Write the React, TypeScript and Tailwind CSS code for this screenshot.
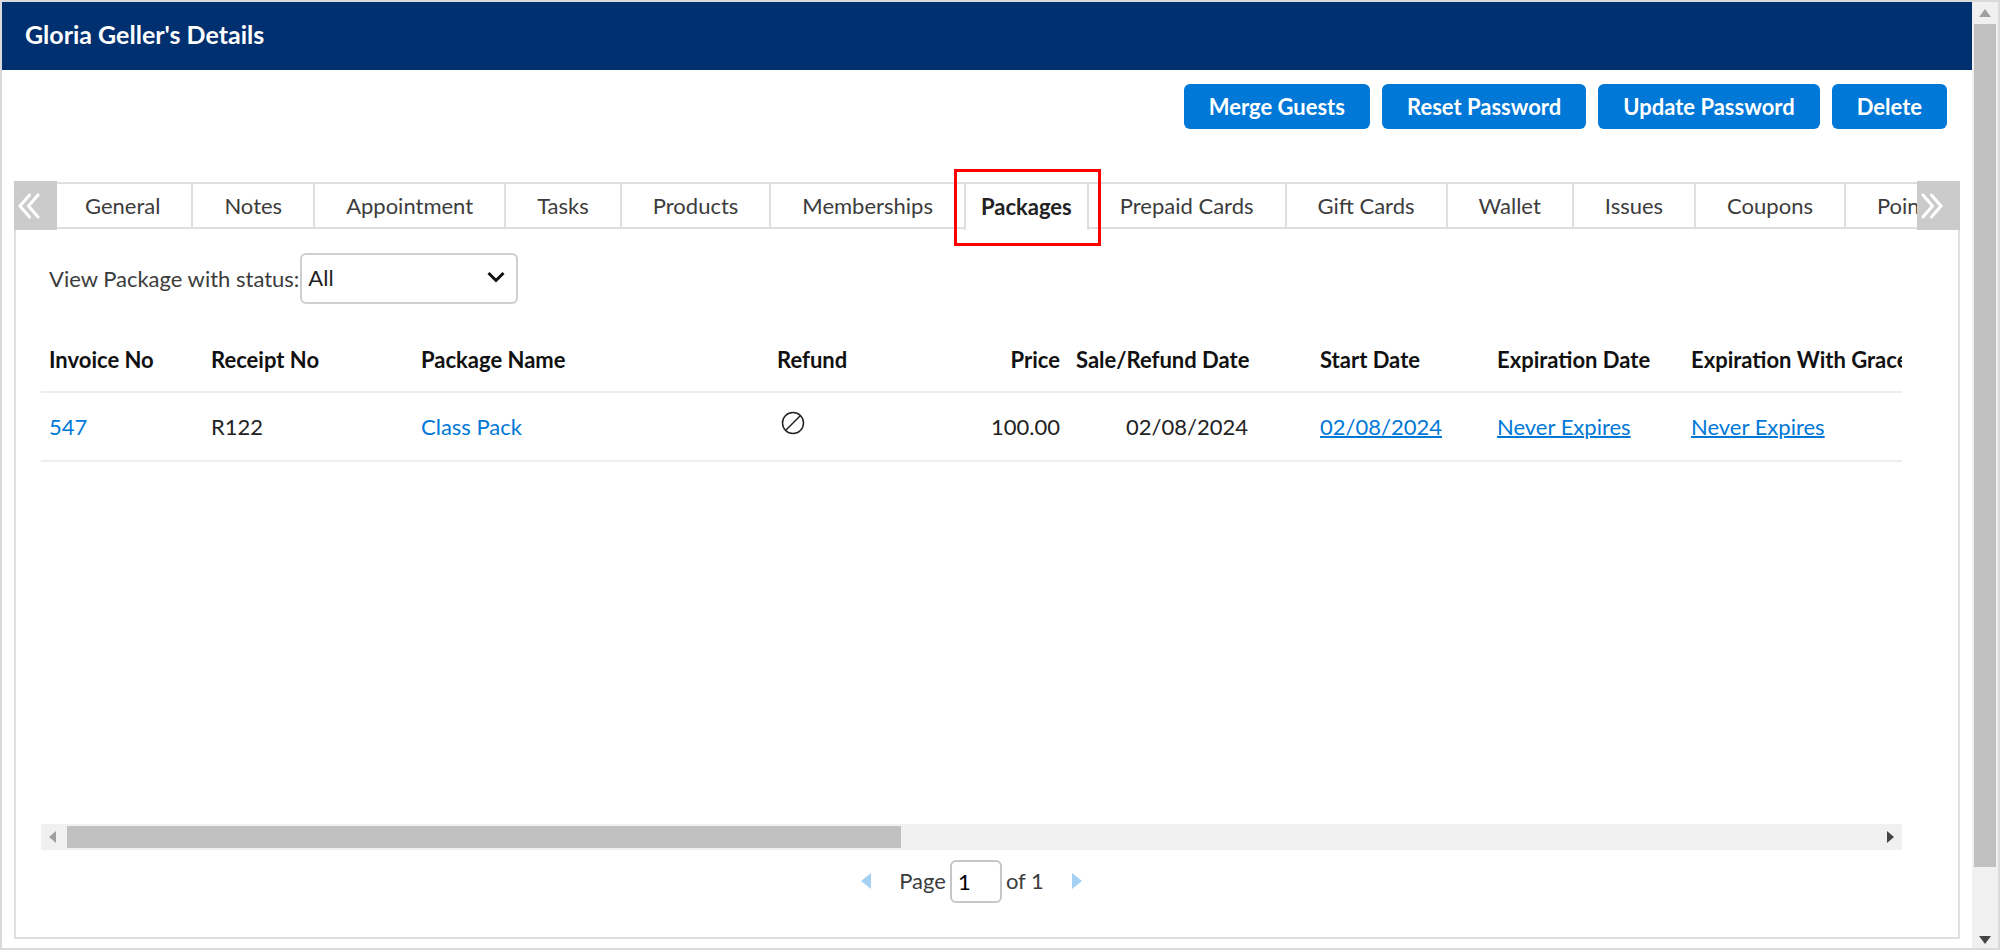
import React, { useState } from 'react';

const actions = ['Merge Guests', 'Reset Password', 'Update Password', 'Delete'];

const tabs = [
  'General',
  'Notes',
  'Appointment',
  'Tasks',
  'Products',
  'Memberships',
  'Packages',
  'Prepaid Cards',
  'Gift Cards',
  'Wallet',
  'Issues',
  'Coupons',
  'Points',
];

const packages = [
  {
    invoice: '547',
    receipt: 'R122',
    name: 'Class Pack',
    price: '100.00',
    saleDate: '02/08/2024',
    startDate: '02/08/2024',
    expiration: 'Never Expires',
    grace: 'Never Expires',
  },
];

const Triangle = ({ className }: { className: string }) => (
  <svg viewBox="0 0 12 16" preserveAspectRatio="none" className={className} fill="currentColor" aria-hidden="true">
    <path d="M12 0v16L0 8z" />
  </svg>
);

const DoubleChevron = ({ className = '' }: { className?: string }) => (
  <svg
    viewBox="0 0 22 28"
    className={`w-[22px] h-7 ${className}`}
    fill="none"
    stroke="currentColor"
    strokeWidth="3"
    strokeLinecap="round"
    aria-hidden="true"
  >
    <path d="M11.500 3L2 14l9.500 11M20 3l-9.500 11L20 25" />
  </svg>
);

const TabBar = ({ active, setActive }: { active: string; setActive: (t: string) => void }) => (
  <div className="flex items-stretch h-[49px]">
    <button aria-label="Previous tabs" className="relative z-10 w-[43px] shrink-0 bg-[#cbcbcb] text-white flex items-center pl-1">
      <DoubleChevron />
    </button>
    <div className="flex-1 min-w-0 -ml-[3px]">
      <div className="flex h-full pt-px overflow-x-clip" role="tablist">
        {tabs.map((tab) => (
          <div key={tab} className="relative shrink-0 flex">
            <button
              role="tab"
              aria-selected={tab === active}
              onClick={() => setActive(tab)}
              className={`whitespace-nowrap ${
                tab === active
                  ? '-ml-[2px] px-[15px] font-bold text-[#222] bg-white border-x-2 border-t-2 border-[#dfdfdf]'
                  : 'mb-px px-[31px] text-[#3c3c3c] border-y-2 border-r-2 border-[#dfdfdf]'
              }`}
            >
              {tab}
            </button>
            {tab === active && (
              <span className="absolute -inset-x-3 -top-[13px] -bottom-4 border-3 border-[#f00] pointer-events-none z-10" />
            )}
          </div>
        ))}
      </div>
    </div>
    <button aria-label="Next tabs" className="relative w-[43px] shrink-0 bg-[#cbcbcb] text-white flex items-center pl-1">
      <DoubleChevron className="rotate-180" />
    </button>
  </div>
);

const PackageTable = () => (
  <div className="overflow-hidden">
    <table className="table-fixed w-[1942px] text-left">
      <colgroup>
        <col className="w-[162px]" />
        <col className="w-[210px]" />
        <col className="w-[356px]" />
        <col className="w-[200px]" />
        <col className="w-[99px]" />
        <col className="w-[188px]" />
        <col className="w-[233px]" />
        <col className="w-[194px]" />
        <col className="w-[300px]" />
      </colgroup>
      <thead>
        <tr className="h-[64px] border-b-2 border-[#eee] text-[#111] whitespace-nowrap">
          <th className="px-2">Invoice No</th>
          <th className="px-2">Receipt No</th>
          <th className="px-2">Package Name</th>
          <th className="px-2">Refund</th>
          <th className="px-2 text-right">Price</th>
          <th className="px-2 text-right">Sale/Refund Date</th>
          <th className="pl-16">Start Date</th>
          <th className="px-2">Expiration Date</th>
          <th className="px-2">Expiration With Grace</th>
        </tr>
      </thead>
      <tbody>
        {packages.map((p) => (
          <tr key={p.invoice} className="h-[69px] border-b-2 border-[#eee] text-[#222]">
            <td className="px-2"><a href="#" className="text-[#0078d7]">{p.invoice}</a></td>
            <td className="px-2">{p.receipt}</td>
            <td className="px-2"><a href="#" className="text-[#0078d7]">{p.name}</a></td>
            <td className="px-2">
              <button aria-label="Refund" className="block pl-1 pb-2">
                <svg viewBox="0 0 24 24" className="w-6 h-6" fill="none" stroke="#222" strokeWidth="1.5">
                  <circle cx="12" cy="12" r="10.5" />
                  <path d="M4.8 19.2L19.2 4.8" />
                </svg>
              </button>
            </td>
            <td className="px-2 text-right">{p.price}</td>
            <td className="px-2 text-right">{p.saleDate}</td>
            <td className="pl-16"><a href="#" className="text-[#0078d7] underline decoration-2">{p.startDate}</a></td>
            <td className="px-2"><a href="#" className="text-[#0078d7] underline decoration-2">{p.expiration}</a></td>
            <td className="px-2"><a href="#" className="text-[#0078d7] underline decoration-2">{p.grace}</a></td>
          </tr>
        ))}
      </tbody>
    </table>
  </div>
);

const App: React.FC = () => {
  const [active, setActive] = useState('Packages');
  const [page, setPage] = useState('1');

  return (
    <div className="min-h-screen flex border-2 border-[#dadada] bg-white font-['Lato',sans-serif] text-[22px] leading-7 text-[#3c3c3c]">
      <div className="flex-1 min-w-0 flex flex-col">
        <header className="h-[68px] bg-[#003070] flex items-center px-[23px]">
          <h1 className="text-white text-[25px] font-bold pb-1">{"Gloria Geller's Details"}</h1>
        </header>

        <div className="flex justify-end gap-3 pt-[14px] pr-[25px]">
          {actions.map((label) => (
            <button key={label} className="h-[45px] px-[25px] rounded-md bg-[#0078d7] text-white font-bold">
              {label}
            </button>
          ))}
        </div>

        <main className="flex-1 flex flex-col mt-[52px] mx-3 mb-[9px]">
          <TabBar active={active} setActive={setActive} />

          <section className="flex-1 flex flex-col border-2 border-t-0 border-[#dfdfdf] pl-[25px] pr-14 pt-[23px]">
            <div className="flex items-center gap-px pl-2">
              <label htmlFor="status">View Package with status:</label>
              <div className="relative">
                <select
                  id="status"
                  className="appearance-none block w-[218px] h-[51px] pl-[6px] pb-px rounded-md border-2 border-[#cfcfcf] bg-white text-[#222]"
                >
                  <option>All</option>
                  <option>Active</option>
                  <option>Expired</option>
                </select>
                <svg
                  viewBox="0 0 18 12"
                  className="absolute right-[13px] top-[18px] w-[18px] h-3 pointer-events-none"
                  fill="none"
                  stroke="#111"
                  strokeWidth="3"
                >
                  <path d="M1.5 2L9 9.500 16.500 2" />
                </svg>
              </div>
            </div>

            <div className="flex-1 pt-6">
              <PackageTable />
            </div>

            <div className="flex items-center h-[26px] bg-[#f0f0f0] py-[2px]">
              <Triangle className="w-[7px] h-3 ml-2 mr-[11px] shrink-0 text-[#a0a0a0]" />
              <div className="flex-1 h-full">
                <div className="w-[46.1%] h-full bg-[#c0c0c0]" />
              </div>
              <Triangle className="w-[7px] h-3 ml-[11px] mr-2 shrink-0 rotate-180 text-[#444]" />
            </div>

            <div className="flex items-center justify-center h-[87px] pb-[25px]">
              <button aria-label="Previous page" className="mr-7 text-[#a4d0f2]">
                <Triangle className="w-[10px] h-4" />
              </button>
              <label htmlFor="page">Page</label>
              <input
                id="page"
                value={page}
                onChange={(e) => setPage(e.target.value)}
                className="w-[52px] h-[43px] mx-1 pl-[6px] rounded-md border-2 border-[#c6c6c6] text-black"
              />
              <span>of 1</span>
              <button aria-label="Next page" className="ml-7 text-[#a4d0f2]">
                <Triangle className="w-[10px] h-4 rotate-180" />
              </button>
            </div>
          </section>
        </main>
      </div>

      <div className="w-[26px] shrink-0 flex flex-col items-center bg-[#f0f0f0] px-[2px]">
        <Triangle className="w-2 h-3 my-[5px] rotate-90 text-[#a0a0a0]" />
        <div className="w-full flex-1">
          <div className="w-full h-[92.8%] bg-[#c0c0c0]" />
        </div>
        <Triangle className="w-2 h-3 my-[2px] -rotate-90 text-[#444]" />
      </div>
    </div>
  );
};

export default App;
